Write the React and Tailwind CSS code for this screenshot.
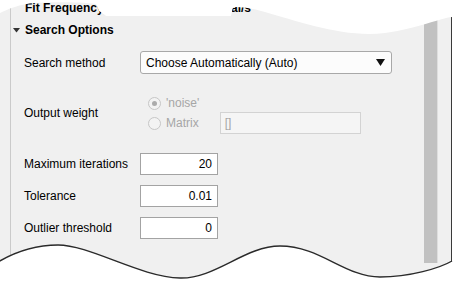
import React from 'react'

const Radio = ({ checked, label }) => (
  <div className="flex items-center">
    <span className="w-[13px] h-[13px] rounded-full border border-[#c6c6c6] bg-[#f3f3f3] flex items-center justify-center">
      {checked && <span className="w-[5px] h-[5px] rounded-full bg-[#ababab]" />}
    </span>
    <span className="ml-[5px] text-[#a6a6a6]">{label}</span>
  </div>
)

const NumField = ({ value }) => (
  <div className="w-[78px] h-[22px] border border-[#a3a3a3] bg-white flex items-center justify-end pr-[5px]">
    {value}
  </div>
)

const Row = ({ label, children, className = '' }) => (
  <div className={`flex items-center pl-[13px] ${className}`}>
    <div className="w-[116px]">{label}</div>
    {children}
  </div>
)

export default function App() {
  return (
    <div className="relative w-[457px] h-[286px] overflow-hidden bg-white text-[12px] leading-[14px] text-black" style={{ fontFamily: '"Liberation Sans", Arial, sans-serif' }}>
      <div className="flex h-full w-[452px] bg-[#f0f0f0] border-r border-[#3a3a3a]">
        <div className="w-[10px]" />
        <div className="w-px bg-[#cacaca]" />

        <div className="w-[413px] flex flex-col">
          {/* header of the section above, mostly torn away */}
          <div className="mt-[1px] h-[14px] pl-[14px] font-bold whitespace-nowrap">Fit Frequency Range and Unit Interval/s</div>

          <div className="mt-[8px] h-[14px] flex items-center">
            <svg width="8" height="5" viewBox="0 0 8 5" className="ml-[2px] mr-[4px]">
              <path d="M0 0 H7 L3.5 4.5 Z" fill="#333" />
            </svg>
            <span className="font-bold">Search Options</span>
          </div>

          <Row label="Search method" className="mt-[14px]">
            <div className="w-[252px] h-[23px] rounded-[3px] border border-[#a8a8a8] bg-[#fcfcfc] flex items-center justify-between pl-[5px] pr-[6px]">
              <span>Choose Automatically (Auto)</span>
              <svg width="9" height="7" viewBox="0 0 9 7">
                <path d="M0 0 H9 L4.5 7 Z" fill="#111" />
              </svg>
            </div>
          </Row>

          <div className="mt-[22px] flex items-center pl-[13px]">
            <div className="w-[116px] mb-[4px]">Output weight</div>
            <div className="flex flex-col pl-[8px]">
              <div className="h-[14px] flex items-center">
                <Radio checked label="'noise'" />
              </div>
              <div className="mt-[2px] h-[22px] flex items-center">
                <Radio label="Matrix" />
                <div className="ml-[21px] w-[141px] h-[22px] border border-[#d3d3d3] bg-[#f5f5f5] flex items-center pl-[4px] text-[#a6a6a6]">[]</div>
              </div>
            </div>
          </div>

          <Row label="Maximum iterations" className="mt-[19px]">
            <NumField value="20" />
          </Row>
          <Row label="Tolerance" className="mt-[10px]">
            <NumField value="0.01" />
          </Row>
          <Row label="Outlier threshold" className="mt-[10px]">
            <NumField value="0" />
          </Row>
        </div>

        <div className="w-[13px] h-[263px] bg-[#c1c1c1]" />
        <div className="w-px h-[263px] bg-[#dedede]" />
      </div>

      {/* torn paper edges */}
      <svg className="absolute inset-0 pointer-events-none" width="457" height="286" viewBox="0 0 457 286">
        <path d="M0 0 H457 V17 L452 17 C440 18 420 28 385 33 C345 38 300 22 265 12 C252 8 242 7 233 7 L231 16 H106 C104 14 101 12 99 11 C98 8 97 6 96 4 C80 2 50 2 35 3 C20 4 8 9 0 13 Z" fill="#fff" />
        <path d="M-2 262 C15 252 35 245 58 245 C90 245 140 277 180 278 C215 279 245 246 280 246 C320 246 345 277 380 277 C410 277 440 268 452 261 L457 261 V286 H-2 Z" fill="#fff" />
        <path d="M-2 262 C15 252 35 245 58 245 C90 245 140 277 180 278 C215 279 245 246 280 246 C320 246 345 277 380 277 C410 277 440 268 452 261" fill="none" stroke="#2a2a2a" strokeWidth="1.4" />
      </svg>
    </div>
  )
}
